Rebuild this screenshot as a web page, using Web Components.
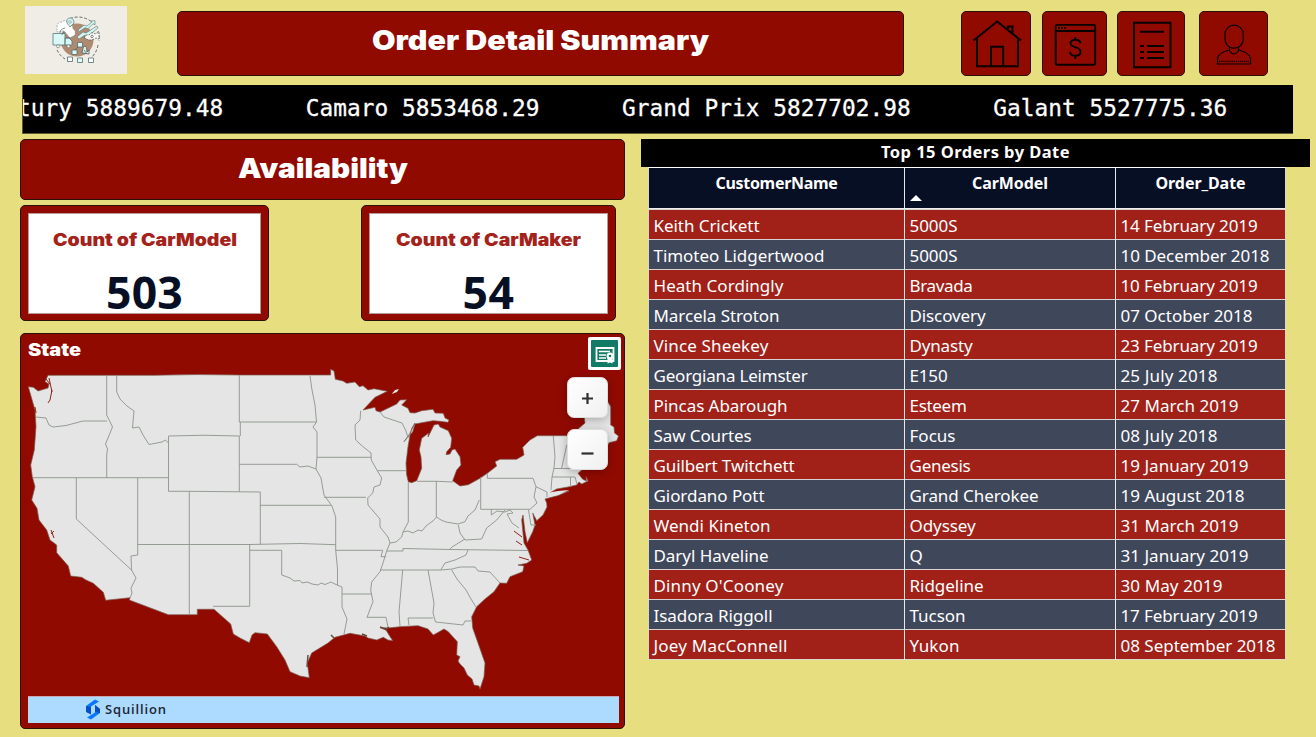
<!DOCTYPE html>
<html lang="en"><head><meta charset="utf-8"><title>Order Detail Summary</title>
<style>body{margin:0;background:#e6de7f;font-family:"Open Sans",sans-serif}</style></head><body>
<order-dashboard></order-dashboard>
<script>
const define=(name,html,setup)=>customElements.define(name,class extends HTMLElement{
  constructor(){super();this.attachShadow({mode:'open'}).innerHTML=html;}
  connectedCallback(){if(setup)setup(this,this.shadowRoot);}
});
// A line of text fitted to the width in its w attribute, by tracking or, with the stretch attribute, by widening the letters.
define('fit-text','<style>:host{display:inline-block;white-space:pre}span{display:inline-block;transform-origin:0 0}</style><span></span>',(el,r)=>{
  const s=r.querySelector('span');s.textContent=el.getAttribute('text');
  const w=+el.getAttribute('w'),n=s.textContent.length;
  if(!w)return;
  const nat=s.getBoundingClientRect().width;
  if(el.hasAttribute('stretch')){s.style.transform='scaleX('+w/nat+')';el.style.width=w+'px';}
  else s.style.letterSpacing=(w-nat)/n+'px';
});
define('red-panel',`<style>:host{display:block;box-sizing:border-box;background:#910a00;border:1px solid #2c1206;border-radius:5px}</style><slot></slot>`);
define('banner-title',`<style>:host{display:block}red-panel{height:100%;display:flex;justify-content:center;color:#fff;font:900 27px/1 Inter,sans-serif;padding-top:var(--pt,15px)}</style><red-panel><slot></slot></red-panel>`);
define('company-logo',`<style>:host{display:block;width:102px;height:68px;background:#f0ede6}svg{display:block}</style>
<svg width="102" height="68" viewBox="25 6 102 68">
<circle cx="77" cy="40" r="16.5" fill="#b08a70"/>
<path d="M57 50a22 22 0 0 0 8 9M98 45a22 22 0 0 1-6 12M70 18.500a22 22 0 0 1 26 8M98 31a23 23 0 0 1 1 10" fill="none" stroke="#454b4b" stroke-width=".8" stroke-dasharray="3 1.800"/>
<path d="M57 27q0-5 5-5q3-3 6 1q5 1 5 6q3 1 2 6l-5 3-6-7-7 1z" fill="#fff" stroke="#7d8989" stroke-width=".6" stroke-dasharray="2 1"/>
<path d="M70 27l-3-4q-1-5 3-5t4 5z" fill="#d2f7f2" stroke="#567779" stroke-width=".7"/><circle cx="70" cy="22" r="1.300" fill="#fff" stroke="#567779" stroke-width=".5"/>
<path d="M53 33.500h12v11.500H53zM65 38h4l3 3v4h-7z" fill="#daf8f5" stroke="#567779" stroke-width=".8"/>
<path d="M60 33q0-4 5-5M62 35q0-3 3-3M66 38h5" fill="none" stroke="#567779" stroke-width=".8"/>
<circle cx="58" cy="46.300" r="1.500" fill="#fff" stroke="#566" stroke-width=".6"/><circle cx="68.500" cy="46.300" r="1.500" fill="#fff" stroke="#566" stroke-width=".6"/>
<path d="M78 30l6-5 3 1 5-4-1-1 4-.3v4l-2-1-5 5-3-1-6 4zM77 37l6-5 3 1 11-7 1 2-10 8-3-1-6 4z" fill="#d2f7f2" stroke="#567779" stroke-width=".6"/>
<path d="M84 38q2-4 5-3 3-4 6-1l4-2v7l-3-1q-6 4-11 0z" fill="#f8f8f5" stroke="#454b4b" stroke-width=".7" stroke-dasharray="2 1"/><circle cx="92" cy="36.500" r="1.200" fill="#fff" stroke="#555" stroke-width=".7"/>
<path d="M79 46l-5 5M84 50l3 4M82 53q1-7 3-7t2 6l2-2v4z" fill="#dcecea" stroke="#4b6061" stroke-width=".8"/>
<g fill="#dcfaf7" stroke="#536e70" stroke-width=".8"><path d="M77.500 42.500h5v4.500h-5zM72 50h5v4.500h-5zM77.500 58h5v4.500h-5z"/><path d="M67.500 57h5v4.500h-5zM88.500 58h5v4.500h-5z" fill="#fff"/></g></svg>`);
const icons={
home:'<path d="M973.500 40.500 997.200 21.500 1021 40.500M977 38.500V66.300H1018V38.500M991 66V46.800H1003.200V66M1008 29.500V26.500H1012.500V34" fill="none" stroke="#080200" stroke-width="2"/>',
money:'<g fill="none" stroke="#080200" stroke-width="1.900"><rect x="1055.700" y="24.900" width="39.500" height="39.800" rx="1.500"/><path d="M1056 31H1095"/><path d="M1058 28h8" stroke-dasharray="2 1" stroke-width="1.300"/><path d="M1080.500 43.300q-.5-3.500-5-3.500t-5 3.300q0 3 5 4.200t5 4.500q0 4-5 4t-5.500-4M1075.300 37v3M1075.300 56v3"/></g>',
list:'<g fill="none" stroke="#080200" stroke-width="1.900"><path d="M1134 22.700h36.500v44.600h-36.500zM1140 31.800h24M1147 46h17M1147 52h17M1147 58h17"/><path d="M1140 46h4M1140 52h4M1140 58h4"/></g>',
user:'<g fill="none" stroke="#080200" stroke-width="1.200"><rect x="1225" y="25.200" width="18.300" height="23" rx="9"/><path d="M1229.500 47v4q4.500 6 9 0v-4M1229.500 50q-12 3-12 9v5h33v-5q0-6-12-9"/><path d="M1219 61.300h30" stroke-dasharray="1.200 .9"/></g>'};
define('nav-button',`<style>:host{display:block;height:65px}red-panel{height:65px}</style><red-panel></red-panel>`,(el,r)=>{
  const x=+el.getAttribute('x'),w=+el.getAttribute('w');el.style.width=w+'px';
  r.querySelector('red-panel').innerHTML=`<svg width="${w}" height="65" viewBox="${x} 11 ${w} 65" style="display:block;margin:-1px">${icons[el.getAttribute('icon')]}</svg>`;});
define('price-ticker',`<style>:host{display:block;height:48px;background:#000;border-bottom:1px solid #5c5833;border-left:1px solid #5c5833;box-sizing:border-box;overflow:hidden;color:#fff;font:22.750px/46px "DejaVu Sans Mono",monospace;letter-spacing:.055px;white-space:pre;-webkit-text-stroke:.3px #fff}div{display:flex;gap:82.500px;margin-left:-6px}span{flex:none}</style><div></div>`,(el,r)=>{
 r.querySelector('div').innerHTML=['tury 5889679.48','Camaro 5853468.29','Grand Prix 5827702.98','Galant 5527775.36'].map(t=>`<span>${t}</span>`).join('');});
define('count-card',`<style>:host{display:block}red-panel{height:116px;padding:7px}.in{box-sizing:border-box;height:101px;background:#fff;border:1px solid #b89a98;display:flex;flex-direction:column;align-items:center}
.t{font:900 17.300px/22px Inter,sans-serif;color:#a4221a;margin-top:15px}.n{font:700 44.500px/50px "Noto Sans",sans-serif;color:#060f24;margin-top:16px}</style><red-panel><div class="in"><fit-text class="t"></fit-text><fit-text class="n"></fit-text></div></red-panel>`,(el,r)=>{
 for(const [c,t,w] of [['.t','text','w'],['.n','num','nw']]){const f=document.createElement('fit-text');f.className=c.slice(1);f.setAttribute('text',el.getAttribute(t));f.setAttribute('w',el.getAttribute(w));if(c==='.t')f.setAttribute('stretch','');r.querySelector(c).replaceWith(f);}});
define('zoom-button',`<style>:host{display:block;width:41px;height:41px;border-radius:7px;background:linear-gradient(135deg,#fff,#f0f0f0);border:1px solid #ddd;box-sizing:border-box;box-shadow:0 2px 9px #0004}svg{display:block}</style><svg width="39" height="39"><path stroke="#303030" stroke-width="2.200" fill="none"/></svg>`,(el,r)=>{
 r.querySelector('path').setAttribute('d',el.hasAttribute('plus')?'M14 20.500h11M19.500 15v11':'M13.500 23.500h12');});
define('state-map',`<style>:host{display:block}red-panel{height:396px;position:relative;color:#fff}.h{height:31px;padding:5px 0 0 7px;box-sizing:border-box;font:900 17px/22px Inter,sans-serif}
svg.m{display:block;margin-left:7px}.bar{margin:0 5px 0 7px;height:26px;border-top:1px solid #c9a9b5;background:#addaff;display:flex;align-items:center;color:#1c2733;font:600 13px/24px "Open Sans",sans-serif}.bar fit-text{height:26px}.bar svg{margin:0 5px 2px 58px}
.ctl{position:absolute;right:16px;top:43px;display:grid;gap:11px}.badge{position:absolute;right:3px;top:3px;background:#fff;width:33px;height:33px;border-radius:2px}</style>
<red-panel><div class="h"><fit-text text="State" w="53" stretch></fit-text></div>
<svg class="m" width="591" height="331" viewBox="28 365 591 331" stroke-linejoin="round">
<path fill="#e5e5e5" stroke="#7b5a50" stroke-width=".7" d="M48 375.300H155Q195 374 239 375H330.700V369.300L334 371 335.300 379.300 343 381 346.700 383.300 355 382 359.300 386.700 363 385.700 368 390 374 388.700 387.300 391.300 375 397.300 363 410 375 407.300 376 410.700 380 412 396.700 404 400 400 406.700 399.700 401.700 405 408 408.300 410 412.700 415 413 421.700 410.700 433 409.300 435 413 443.300 413.300 445 418 449 420 448 422.300 440 421.300 433 420.700 421.700 422.700 415 424 412.700 431.700 404 441.700 410 433 415 423 412 428 410 435 408 446.700 406 463.300 406.700 475 408.300 481.700 411.700 482.700 416.700 480.700 421.700 468.300 421 457 419.300 450 421.700 438.300 428.300 433.300 428 437 430.700 431.700 434 425 438.300 424 440 427 448.300 430.700 451.700 438.300 450.700 447.300 446.700 451.700 446 454.700 450 454 452 450 455 449 460 456.700 461 465 456.700 470 452.700 480.700 460 486 468.300 484.700 480 478.300 487.300 473.300 496.700 466 495 461.700 500 459.300 516.700 459.300 524 455 522.700 447.300 530 440 537.300 435.700H566.700L577 430 585 423 584 415 590 403 608 402 610.700 406.700V425L614 427 614.500 433 618.500 436 616.700 440.700 609 442.700 601.700 458 590 468 581.700 470 578 473.300 582.700 479.300 586.500 481 586 476.700 588 481 581.700 484 579 482 576.700 485 568 487 556.700 489 550 492.700 546.700 496.700 569 491 558 495.500 545 499 546.700 503 547 507 543 515 536.700 520.700 532.700 513 535 525 532.700 531.700 527.300 542.700 525 531.700 523 515 521.700 520 522.700 530 524 543 528 550 531.700 560 526.700 563.300 518 565 524 566 522.700 571.700 510 576.700 506.700 583.300 500 583 494 591.700 485 599 476.700 606.700 471.700 616.700 472.700 628 479.300 646.700 485 663 484 676.700 480 689 479 686 474 685 472 679 467.300 675 464 668 460 664 458 661 460 656.700 456.700 655 457.300 641.700 448.300 631.700 444 629 437 633 433.300 635 428 629 418 625.700 400 626.700 388 628 380 627.500 386 630 389 635 392.700 640.700 388 640 383.300 637.300 376.700 640 368 638 365 636 350 633.300 335 637.300 328 643 311.700 653 307.300 663 309.300 677.700 300 676 290 671.700 285 660 276.700 646.700 267.300 634 255 632.700 252 635 249.300 642.700 240 638 233.300 634 230.700 624 214 609.300H197.300V614.700H168.300L129.300 600 130 597.700 105.700 600.300 103.300 592.300 93.300 583.300 86 580 81.700 577.300 70.700 576 68.300 566 56.700 552.700V545L50 540 46.700 530 39 520 37 508.300 31.700 500 35 486.700 32.300 476.700 30.700 465 34.300 450 36 426.700 35 410 28.300 386.700 33.300 387.300 38 391 48 388 49 384 45 381.700Z"/>
<path d="M391.700 394 395 390 399 389 397 392ZM541 494 558 491 569 490 558 495 545 498Z" fill="#e5e5e5"/>
<path fill="none" stroke="#8b948a" stroke-width=".9" d="M35.500 417 46 418 49 425 53 427 66 425.500 83 421H107M106.700 375V415L112.500 427 105.500 444 107.500 449 106.700 455V477.700M116.700 375V392L120 399 127 406 134 411 132.500 428 139 427 143 435 149 444.500 162 442 165.500 440 168.500 443M168.500 491.300V436Q204 434.500 239.500 436M239.300 375V422H316.500M240.300 422V436M239.300 436V491.700M239.300 464.300H296.700L300 467 308 466 316 469M168.500 491.300H189L260.300 492V544.500M260.300 505.300H331M189.300 492V614.700M33 477.700H168.500M76.300 478V519L131.500 570M137.700 478V555L131 556 131.500 570 136 578 131 588 132 593 130 598M137.700 544.500H249.700L300 543.500 335.700 544.700M249.700 544V606.300H213M249.700 550.300H281.700V575L286 576.500 290 578 294 581 300 580.500 302 583 307 582 312 584 318 585 321 583 325 584.500 331 582 337 585 342 587V607L347 619 344 634M335.700 517V550.300L337.500 569V585M335.700 550.300H382.700L381 556.700H386M342 594H372M360.700 410.700 360 420 355 425 355.700 440 363 446.700 371 453 371.300 460 377.300 470.700 381.700 478 380 485 374 487 372.700 493 367.700 498 368 505 374 512 380 519 380 527 388 537 390 543 387 550 383 563 380 571.700 371.700 582 370.700 590 373 601.700 367 617.300H386L388 627M310 376 312 390 315 405 316.500 422 313 427 317 432V457.300H371M317 457 316 469 321 478 324 495 332 506 335.700 517M324 497.300H366M377.300 470.700H406M408.300 482V522L403 532 401.700 537 396 542 390 543M436.300 481V517M417 481.300H437L453 482M403 532 408 531 413 533 418 530 422 531 426 526 430 523 433 521 436.500 517 441 520 446 522 452 523 458 524 465 521.700 468 516 475 510 479.300 500M480.700 477V509.300H530L537 503 534 497 536 486.700 533 478.300H487.300V473M536 486.700 547 492V497M553.300 436 555 456.700 554 468 552 477 551 490M566.700 445 561.700 468M554 468.500H578M552 477H575L577 484M570.500 477V487M491.300 509V515L497 511 505 512 510 510 513 513 507 514 512 523 519 528M458.300 525 460 533 465 540 481.700 539 486.700 528 496.700 520 505 510M465 539 452 547 450 549M387 551H403V548.500L450 549.500 528 550.500M468 550 466 555 455 560 445 563 441 569.500M380 570H441L452 569 460 567H475L478 571 490 572 500 583M451.700 570 457 579 466 590 471 599 476 607M402.700 570 399 612 400 626M428 570 434 603 433 613 435.500 622M433 618H408L409 625M435.500 622 463 625 465 621H471M528.500 510 531 525H536M380 412 384 417 402 423 406 431 408 438"/>
<path d="M46 379 50 384M49 378 52 392M48 403 50 400 52 390M35 407 36 413M51 530l3 8M54 531l-3 3M514 531l8 6M516 541l6 4M519 557l10 3" fill="none" stroke="#8d2118" stroke-width="1"/><path d="M380 627l5 2M389 627l-4 3M331 635l3 3M362 634l5 2M308 655l-1 12" stroke="#6b4a40" stroke-width="1.500"/>
</svg>
<div class="bar"><svg width="14" height="21" viewBox="0 0 14 21"><path d="M0 7 9 .5 13 2.500 5 7.500 5 11 0 9z" fill="#0878ff"/><path d="M0 7v6l5 2.500V8z" fill="#084fc0"/><path d="M14 14 5 20.500 1 18.500 9 13.500V6l5 4z" fill="#0878ff"/><path d="M9 6l5 4v4l-5-1z" fill="#084fc0"/></svg><fit-text text="Squillion" w="62"></fit-text></div>
<div class="badge"><svg width="33" height="33" viewBox="0 0 33 33"><rect x="3" y="3" width="27" height="27" rx="1" fill="#127b66"/><path d="M8.500 11H25.500V24H8.500z" fill="none" stroke="#fff" stroke-width="1.800"/><path d="M11 14.500h11M11 18h7M11 21h7" stroke="#fff" stroke-width="1.600"/><circle cx="22" cy="19" r="2.400" fill="#127b66" stroke="#fff" stroke-width="2.200"/><path d="M19.500 21.500v5l2.500-1 2.500 1v-5z" fill="#fff"/></svg></div>
<div class="ctl"><zoom-button plus></zoom-button><zoom-button></zoom-button></div></red-panel>`);
const rows=[['Keith Crickett',106,'5000S',48,'14 February 2019',137],['Timoteo Lidgertwood',171,'5000S',48,'10 December 2018',149],['Heath Cordingly',130,'Bravada',63,'10 February 2019',137],['Marcela Stroton',126,'Discovery',76,'07 October 2018',132],['Vince Sheekey',115,'Dynasty',63,'23 February 2019',137],['Georgiana Leimster',154,'E150',38,'25 July 2018',97],['Pincas Abarough',134,'Esteem',57,'27 March 2019',118],['Saw Courtes',98,'Focus',46,'08 July 2018',97],['Guilbert Twitchett',141,'Genesis',61,'19 January 2019',128],['Giordano Pott',111,'Grand Cherokee',129,'19 August 2018',124],['Wendi Kineton',117,'Odyssey',66,'31 March 2019',118],['Daryl Haveline',115,'Q',14,'31 January 2019',128],["Dinny O'Cooney",130,'Ridgeline',74,'30 May 2019',102],['Isadora Riggoll',119,'Tucson',56,'17 February 2019',137],['Joey MacConnell',134,'Yukon',50,'08 September 2018',155]];
define('orders-table',`<style>:host{display:block;width:669px;color:#fff;font:400 17px/29px "Noto Sans",sans-serif}.cap{background:#000;height:28px;text-align:center;font:700 16.500px/26px "Noto Sans",sans-serif}
.tb{margin:0 24px 0 7px;border:1px solid #ddd5c8;border-top-color:#fff;width:636px}.r{display:grid;grid-template-columns:255px 211px 170px;height:30.060px;box-sizing:border-box;border-top:1px solid #d9d2d2;background:#3f475b}.r:nth-child(even){background:#a12119}.r>div{box-sizing:border-box;padding:1px 0 0 4.500px;border-left:1px solid #e8e8e8}.r>div:first-child{border-left:0}
.r.hd{height:40.500px;background:#060f24;border:0;border-bottom:1px solid #eee;text-align:center;font:700 16px/30px "Noto Sans",sans-serif}.hd>div{padding:0!important;position:relative}i{position:absolute;left:5px;top:27px;border:6px solid transparent;border-top:0;border-bottom:6px solid #fff}</style>
<div class="cap"><fit-text text="Top 15 Orders by Date" w="189"></fit-text></div><div class="tb"><div class="r hd"><div><fit-text text="CustomerName" w="122"></fit-text></div><div><i></i><fit-text text="CarModel" w="76"></fit-text></div><div><fit-text text="Order_Date" w="90"></fit-text></div></div></div>`,(el,r)=>{
 r.querySelector('.tb').insertAdjacentHTML('beforeend',rows.map(a=>`<div class="r">${[0,2,4].map(i=>`<div><fit-text text="${a[i]}" w="${a[i+1]}"></fit-text></div>`).join('')}</div>`).join(''));});
define('order-dashboard',`<style>:host{display:flex;flex-direction:column;width:1316px;height:737px;overflow:hidden}
header{display:flex;height:85px;box-sizing:border-box;padding:6px 0 0 25px}header>*{flex:none}header>banner-title{width:727px;height:65px;margin:5px 57px 0 50px}nav-button{margin-top:5px}
price-ticker{margin:0 23px 0 22px;height:49px;flex:none}main{display:grid;grid-template-columns:605px 669px;column-gap:16px;margin:5px 0 0 20px}.left{display:flex;flex-direction:column}.cards{display:flex;gap:92px;margin:5px 0 12px}</style>
<header><company-logo></company-logo><banner-title><fit-text text="Order Detail Summary" w="337" stretch></fit-text></banner-title>
<nav-button icon="home" x="961" w="70"></nav-button><nav-button icon="money" x="1042" w="65" style="margin-left:11px"></nav-button><nav-button icon="list" x="1117" w="68" style="margin-left:10px"></nav-button><nav-button icon="user" x="1199" w="69" style="margin-left:14px"></nav-button></header>
<price-ticker></price-ticker>
<main><div class="left"><banner-title style="height:61px"><fit-text text="Availability" w="170" stretch></fit-text></banner-title>
<div class="cards"><count-card style="width:249px" text="Count of CarModel" w="184" num="503" nw="77"></count-card><count-card style="width:255px" text="Count of CarMaker" w="185" num="54" nw="52"></count-card></div><state-map></state-map></div><orders-table></orders-table></main>`);
</script></body></html>
